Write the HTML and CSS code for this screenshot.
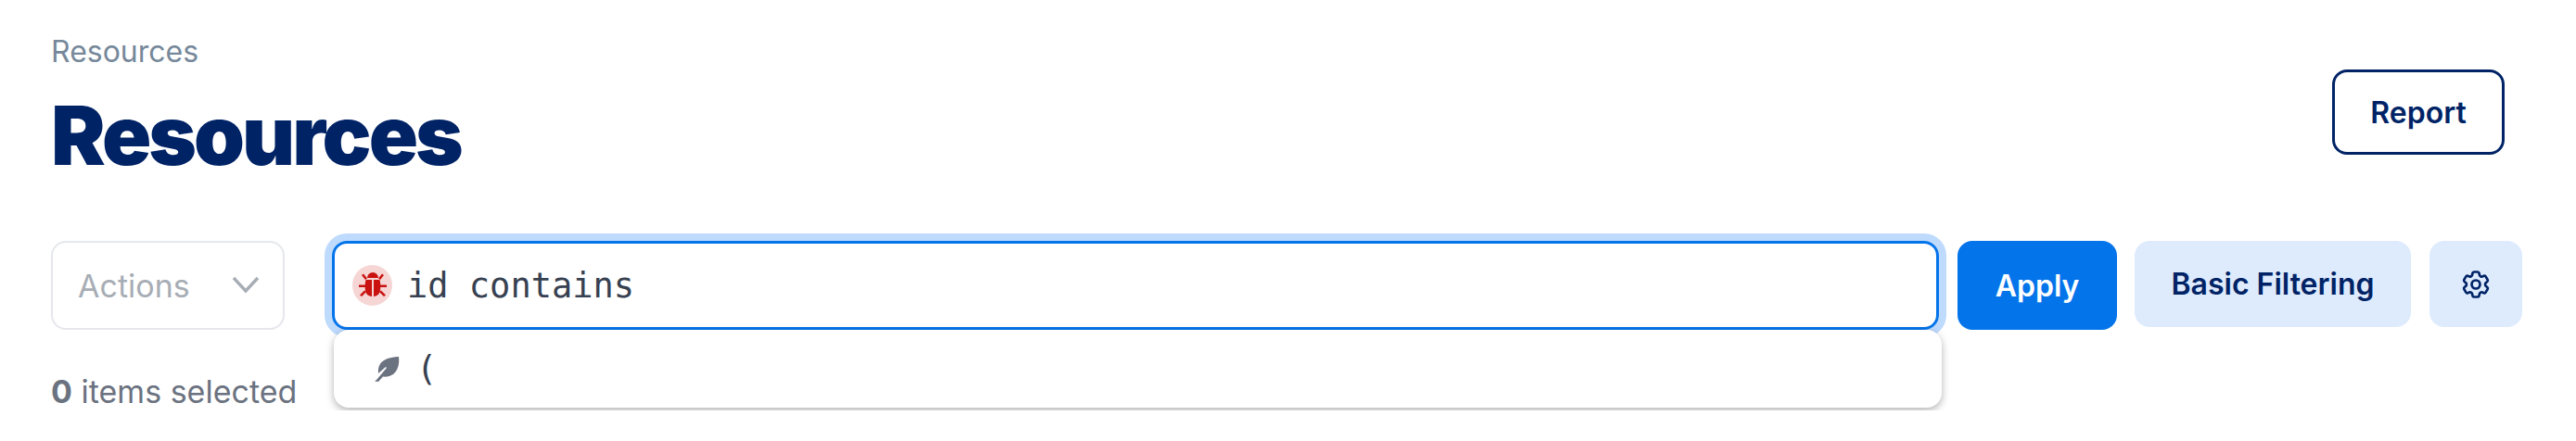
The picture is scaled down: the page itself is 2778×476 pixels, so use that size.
FILE: index.html
```html
<!DOCTYPE html>
<html lang="en">
<head>
    <meta charset="UTF-8">
    <title>Resources</title>
    <link rel="stylesheet" href="styles.css">
</head>
<body>
    <div class="page">
        <div class="fejlec">
            <div>
                <div class="morzsa">Resources</div>
                <h1>Resources</h1>
            </div>
            <button class="gomb report">Report</button>
        </div>
        <div class="sor">
            <div class="bal">
                <div class="actions">
                    <span>Actions</span>
                    <svg width="32" height="32" viewBox="0 0 32 32" fill="none" stroke="#a7adb5" stroke-width="3.4"><path d="M3 8l13 14L29 8"/></svg>
                </div>
                <div class="kijelolt"><b>0</b> items selected</div>
            </div>
            <div class="kereso">
                <div class="mezo">
                    <span class="bogar">
                        <svg width="30" height="30" viewBox="0 0 30 30" fill="#c9120f"><path d="M9 7a6 6 0 0 1 12 0z"/><path d="M7.5 9h6.5v18c-4-.5-6.5-3-7-6.500-.5-3-.5-8 .5-11.500z"/><path d="M22.500 9H16v18c4-.5 6.500-3 7-6.500.5-3 .5-8-.5-11.500z"/><path d="M3 4l2-1.500 4 5-2 1.500zM27 4l-2-1.500-4 5 2 1.500zM0 14.500h7v2.500H0zM23 14.500h7v2.500h-7zM3 27l-2-1.500 5-5 2 1.500zM27 27l2-1.500-5-5-2 1.500z"/></svg>
                    </span>
                    <span class="kod">id contains</span>
                </div>
                <div class="lista">
                    <svg width="28" height="27" viewBox="0 0 28 27" fill="#6b7280"><path d="M27 0c1 8-1 15-6 19-3 2-7 3-11 2.500L5 27l-4-.5 2-1.500L14 12l-1-1L5 18c-.5-6 1-11 6-14 5-3 11-4 16-4z"/></svg>
                    <span class="kod">(</span>
                </div>
            </div>
            <button class="gomb apply">Apply</button>
            <button class="gomb halvany basic">Basic Filtering</button>
            <button class="gomb halvany fogas">
                <svg width="36" height="36" viewBox="0 0 24 24" fill="none" stroke="#002366" stroke-width="1.800" stroke-linecap="round" stroke-linejoin="round"><path d="M9.590 3.940c.09-.542.560-.94 1.110-.94h2.593c.55 0 1.020.398 1.110.94l.213 1.281c.063.374.313.686.645.870.074.040.147.083.220.127.325.196.720.257 1.075.124l1.217-.456a1.125 1.125 0 0 1 1.370.490l1.296 2.247a1.125 1.125 0 0 1-.260 1.431l-1.003.827c-.293.241-.438.613-.430.992a7.723 7.723 0 0 1 0 .255c-.008.378.137.750.430.991l1.004.827c.424.350.534.955.260 1.430l-1.298 2.247a1.125 1.125 0 0 1-1.369.491l-1.217-.456c-.355-.133-.750-.072-1.076.124a6.470 6.470 0 0 1-.220.128c-.331.183-.581.495-.644.869l-.213 1.281c-.090.543-.560.940-1.110.940h-2.594c-.55 0-1.019-.398-1.110-.940l-.213-1.281c-.062-.374-.312-.686-.644-.870a6.520 6.520 0 0 1-.220-.127c-.325-.196-.720-.257-1.076-.124l-1.217.456a1.125 1.125 0 0 1-1.369-.490l-1.297-2.247a1.125 1.125 0 0 1 .260-1.431l1.004-.827c.292-.240.437-.613.430-.991a6.932 6.932 0 0 1 0-.255c.007-.380-.138-.751-.430-.992l-1.004-.827a1.125 1.125 0 0 1-.260-1.430l1.297-2.247a1.125 1.125 0 0 1 1.370-.491l1.216.456c.356.133.751.072 1.076-.124.072-.044.146-.086.220-.128.332-.183.582-.495.644-.869l.214-1.280z"/><path d="M15 12a3 3 0 1 1-6 0 3 3 0 0 1 6 0z"/></svg>
            </button>
        </div>
    </div>
</body>
</html>
```

FILE: styles.css
```css
* {
    box-sizing: border-box;
    margin: 0;
    padding: 0;
}
body {
    background-color: #ffffff;
    font-family: "Inter", sans-serif;
}
.page {
    padding: 40px 58px 0 55px;
}
.fejlec {
    display: flex;
    justify-content: space-between;
    align-items: flex-start;
    height: 220px;
}
.morzsa {
    font-size: 32px;
    line-height: 32px;
    color: #76889a;
}
h1 {
    margin-top: 24px;
    font-size: 88px;
    line-height: 100px;
    font-weight: 900;
    letter-spacing: -3px;
    color: #002366;
}
.gomb {
    border: none;
    border-radius: 16px;
    font-family: "Inter", sans-serif;
    font-size: 32px;
    font-weight: 600;
    cursor: pointer;
}
.report {
    width: 186px;
    height: 92px;
    margin: 35px 19px 0 0;
    border: 3px solid #002366;
    background-color: #ffffff;
    color: #002366;
}
.sor {
    display: flex;
    align-items: flex-start;
}
.bal {
    width: 252px;
    margin-right: 51px;
}
.actions {
    display: flex;
    justify-content: space-between;
    align-items: center;
    height: 96px;
    padding: 0 24px 0 27px;
    border: 2px solid #e5e7eb;
    border-radius: 16px;
    font-size: 34px;
    color: #a7adb5;
}
.kijelolt {
    margin-top: 46px;
    font-size: 34px;
    color: #6b7280;
    white-space: nowrap;
}
.kereso {
    position: relative;
    width: 1733px;
    margin-right: 20px;
}
.mezo {
    display: flex;
    align-items: center;
    gap: 16px;
    height: 96px;
    padding-left: 19px;
    border: 3px solid #0474eb;
    border-radius: 16px;
    box-shadow: 0 0 0 8px #bedafd;
}
.bogar {
    display: flex;
    align-items: center;
    justify-content: center;
    width: 43px;
    height: 44px;
    border-radius: 50%;
    background-color: #f6d5d5;
}
.kod {
    font-family: "DejaVu Sans Mono", monospace;
    font-size: 37px;
    color: #374151;
}
.lista {
    position: absolute;
    top: 96px;
    left: 2px;
    right: -3px;
    display: flex;
    align-items: center;
    gap: 18px;
    height: 84px;
    padding-left: 43px;
    background-color: #ffffff;
    border-radius: 16px;
    box-shadow: 0 3px 8px rgba(0, 0, 0, 0.3);
}
.apply {
    width: 172px;
    height: 96px;
    margin-right: 19px;
    background-color: #0474eb;
    color: #ffffff;
}
.halvany {
    height: 93px;
    background-color: #deebfd;
    color: #002366;
}
.basic {
    width: 298px;
    margin-right: 20px;
}
.fogas {
    display: flex;
    align-items: center;
    justify-content: center;
    width: 100px;
}
```
